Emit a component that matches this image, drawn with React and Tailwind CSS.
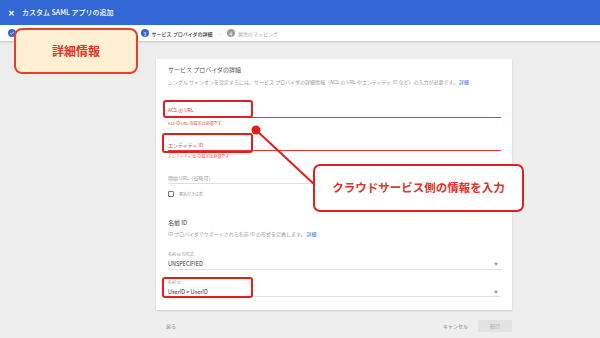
import React from "react";

const RED = "#e41e1e";

function Underline({ children, color = "border-[#e0e0e0]", text = "text-[#9e9e9e]", size = "text-[5px]", pb = "pb-[1px]", mt, right }) {
  return (
    <div className={`${mt} ${pb} border-b ${color} leading-[8px] ${text} ${size} flex justify-between`}>
      <span>{children}</span>
      {right}
    </div>
  );
}

export default function App() {
  return (
    <div className="relative w-[600px] h-[338px] overflow-hidden bg-[#eeeeee] [font-family:'Noto_Sans_CJK_JP','Noto_Sans',sans-serif]">
      {/* Header */}
      <div className="h-[25px] bg-[#3367d6] flex items-center pl-[8px] text-white">
        <span className="text-[8px] leading-none font-bold w-[14px]">✕</span>
        <span className="text-[7px] font-medium leading-none">カスタム SAML アプリの追加</span>
      </div>
      {/* Steps */}
      <div className="h-[17px] bg-white border-b border-[#d4d4d4] shadow-[0_1px_1px_rgba(0,0,0,0.08)] flex items-center pl-[8px] text-[5px] leading-none">
        <span className="w-[8px] h-[8px] rounded-full bg-[#3367d6] flex items-center justify-center">
          <svg width="6" height="6" viewBox="0 0 24 24"><path d="M5 12l5 5L19 7" stroke="white" strokeWidth="3" fill="none" /></svg>
        </span>
        <span className="ml-[3px] text-[#333] font-medium">Google IdP 情報</span>
        <span className="mx-[4px] text-[#aaa]">—</span>
        <span className="w-[8px] h-[8px] rounded-full bg-[#3367d6]" />
        <span className="ml-[3px] w-[50px] text-[#333]">詳細情報</span>
        <span className="ml-[11px] w-[8px] h-[8px] rounded-full bg-[#3367d6] text-white text-[5px] flex items-center justify-center">3</span>
        <span className="ml-[3px] text-[#333] font-medium">サービス プロバイダの詳細</span>
        <span className="mx-[5px] text-[#bbb]">—</span>
        <span className="w-[8px] h-[8px] rounded-full bg-[#9e9e9e] text-white text-[5px] flex items-center justify-center">4</span>
        <span className="ml-[3px] text-[#aaa]">属性のマッピング</span>
      </div>

      {/* Card */}
      <div className="ml-[156px] mt-[17px] w-[356px] bg-white shadow-[0_1px_2px_rgba(0,0,0,0.15)] pl-[12px] pr-[11px] pb-[13px] flex flex-col">
        <div className="mt-[7px] leading-[8px] text-[6px] text-[#555]">サービス プロバイダの詳細</div>
        <div className="mt-[4px] leading-[8px] text-[5px] text-[#9a9a9a] whitespace-nowrap">
          シングル サインオンを設定するには、サービス プロバイダの詳細情報（ACS の URL やエンティティ ID など）の入力が必要です。 <span className="text-[#3367d6]">詳細</span>
        </div>

        <Underline mt="mt-[20px]" pb="pb-[3px]" color="border-[#e53935]" text="text-[#e53935]">ACS の URL</Underline>
        <div className="mt-[2px] leading-[6px] text-[4px] text-[#e53935]">ACS の URL の設定は必須です</div>

        <Underline mt="mt-[15px]" color="border-[#e53935]" text="text-[#e53935]">エンティティ ID</Underline>
        <div className="mt-[2px] leading-[6px] text-[4px] text-[#e53935]">エンティティ ID の設定は必須です</div>

        <Underline mt="mt-[15px]">開始 URL（省略可）</Underline>

        <div className="mt-[6px] h-[8px] flex items-center gap-[5px]">
          <span className="w-[6px] h-[6px] border border-[#777] rounded-[1px]" />
          <span className="text-[4px] text-[#999]">署名付き応答</span>
        </div>

        <div className="mt-[21px] leading-[8px] text-[6px] text-[#444]">名前 ID</div>
        <div className="mt-[3px] leading-[8px] text-[5px] text-[#9a9a9a]">
          ID プロバイダでサポートされる名前 ID の形式を定義します。 <span className="text-[#3367d6]">詳細</span>
        </div>

        <div className="mt-[13px] leading-[6px] text-[4px] text-[#9e9e9e]">名前 ID の形式</div>
        <Underline mt="mt-[3px]" size="text-[5.5px]" text="text-[#333]" right={<span className="text-[4px] text-[#999] pr-[3px]">▼</span>}>UNSPECIFIED</Underline>

        <div className="mt-[9px] leading-[6px] text-[4px] text-[#9e9e9e]">名前 ID</div>
        <Underline mt="mt-[3px]" pb="pb-0" size="text-[5.5px]" text="text-[#333]" right={<span className="text-[4px] text-[#999] pr-[3px]">▼</span>}>UserID &gt; UserID</Underline>
      </div>

      {/* Footer */}
      <div className="ml-[156px] w-[356px] mt-[10px] h-[12px] flex items-center justify-between pl-[10px] text-[5px] text-[#888]">
        <span>戻る</span>
        <div className="flex items-center">
          <span className="mr-[10px]">キャンセル</span>
          <span className="w-[34px] h-[12px] bg-[#e2e2e2] text-[#aaa] flex items-center justify-center">続行</span>
        </div>
      </div>

      {/* Annotations */}
      <div className="absolute left-[14px] top-[28px] w-[124px] h-[46px] bg-[#fff0d4] border-2 border-[#e5402f] rounded-[8px] flex items-center justify-center">
        <span className="text-[12px] font-bold text-[#e0352a] leading-none">詳細情報</span>
      </div>

      <div className="absolute left-[163px] top-[100px] w-[90px] h-[18px] border-2 border-[#e41e1e] rounded-[3px]" />
      <div className="absolute left-[162px] top-[133px] w-[91px] h-[20px] border-2 border-[#e41e1e] rounded-[3px]" />
      <div className="absolute left-[162px] top-[277px] w-[91px] h-[21px] border-2 border-[#e41e1e] rounded-[3px]" />

      <svg className="absolute left-0 top-0" width="600" height="338" viewBox="0 0 600 338">
        <line x1="256" y1="130" x2="315" y2="185" stroke={RED} strokeWidth="2" />
        <circle cx="256" cy="130" r="4.5" fill={RED} />
      </svg>

      <div className="absolute left-[313px] top-[164px] w-[211px] h-[48px] bg-white border-2 border-[#e41e1e] rounded-[7px] flex items-center justify-center">
        <span className="text-[11.5px] font-bold text-[#e0352a] leading-none">クラウドサービス側の情報を入力</span>
      </div>
    </div>
  );
}
